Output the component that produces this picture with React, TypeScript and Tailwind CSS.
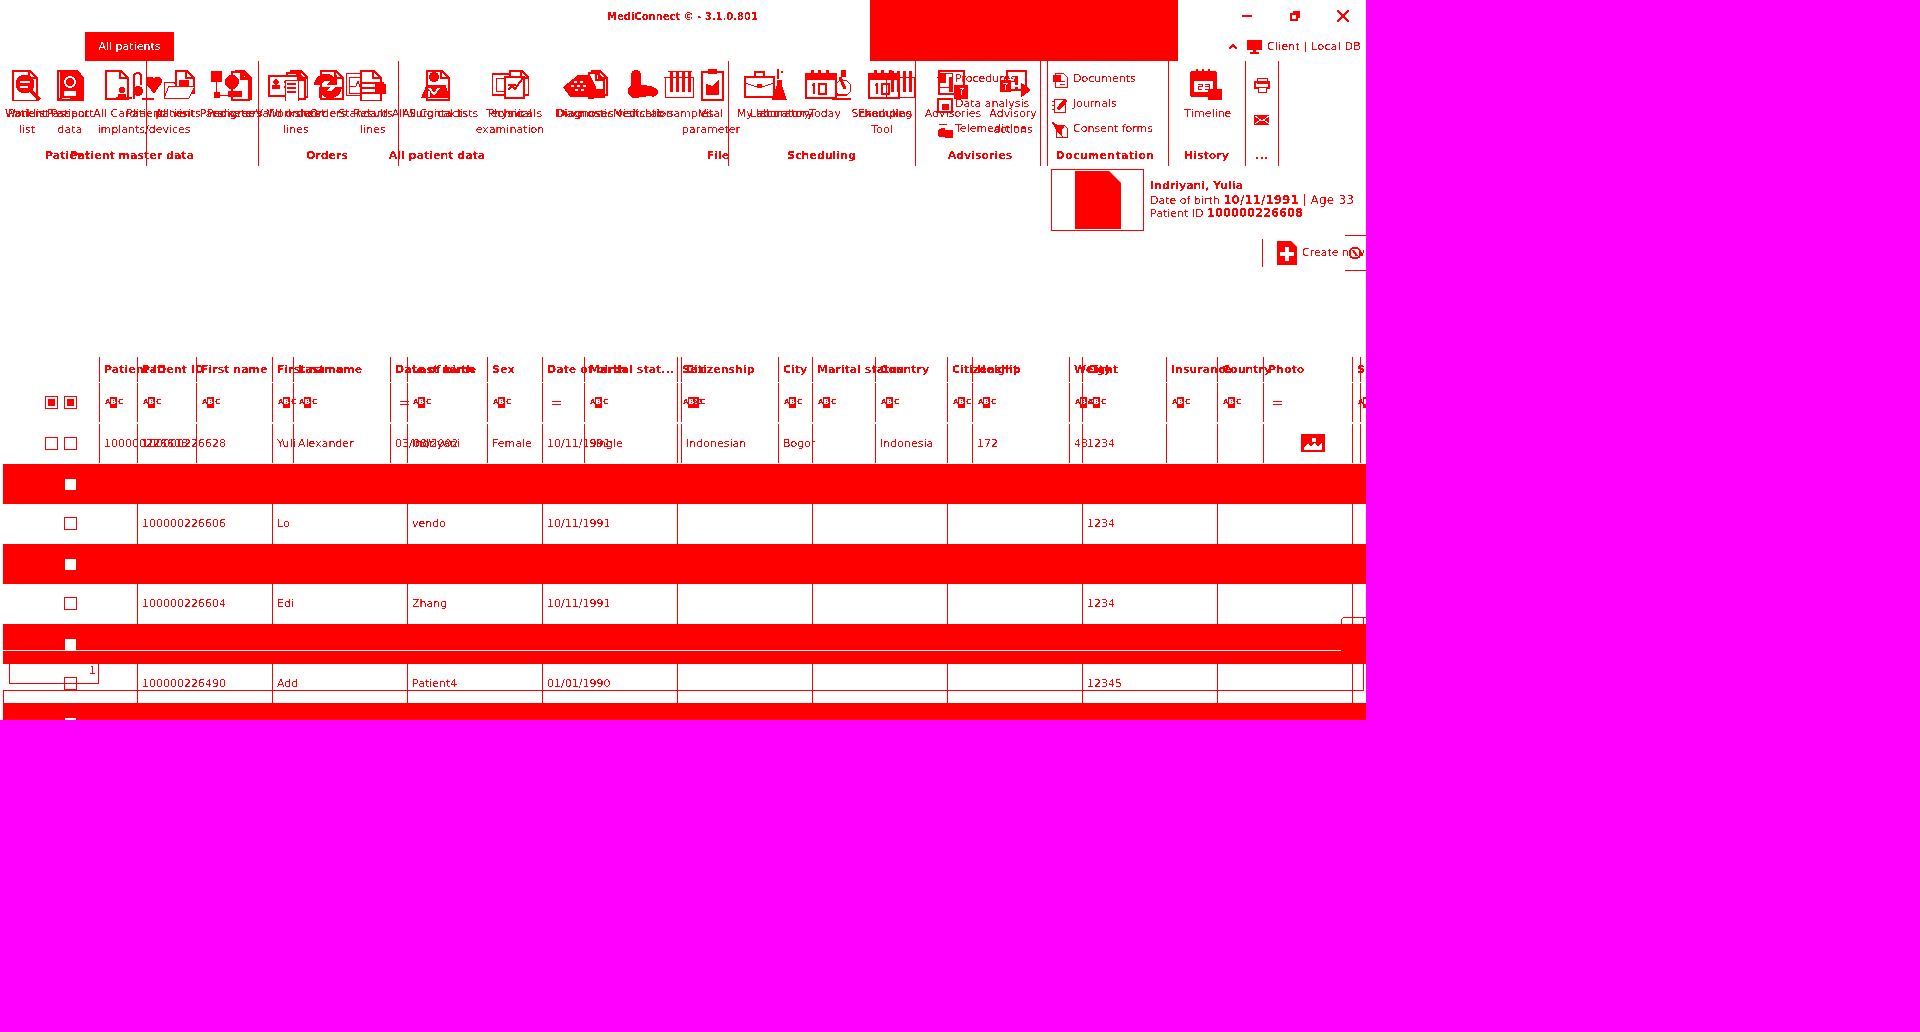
import type { ReactNode } from 'react'

const Svg = ({ w, h = 32, className = '', children }: { w: number; h?: number; className?: string; children: ReactNode }) => (
  <svg width={w} height={h} viewBox={`0 0 ${w} ${h}`} fill="none" stroke="#f00" shapeRendering="crispEdges" className={`shrink-0 ${className}`}>
    {children}
  </svg>
)

const Doc = ({ x = 0, y = 0, w = 22, h = 30 }: { x?: number; y?: number; w?: number; h?: number }) => (
  <path d={`M${x + 0.5} ${y + 0.5}h${w - 7}l7 7v${h - 7}h-${w}z M${x + w - 7} ${y}v8h7`} fill="#fff" strokeWidth="2" />
)

const Person = ({ x, y, s = 1 }: { x: number; y: number; s?: number }) => (
  <g fill="#f00" stroke="none">
    <circle cx={x} cy={y} r={5 * s} />
    <rect x={x - 7 * s} y={y + 6 * s} width={14 * s} height={7 * s} />
  </g>
)

const Ribbon = [
  <Svg w={32} className="ml-[11px]" key="1"><Doc x={1} y={1} w={24} h={30} /><circle cx="14" cy="15" r="9" fill="#f00" /><path d="M9 13h10M9 18h8" stroke="#fff" strokeWidth="2" /><path d="M20 22l9 9" strokeWidth="3" /></Svg>,
  <Svg w={28} className="ml-[13px]" key="2"><path d="M1 1h20l6 7v23H1z" fill="#f00" /><path d="M3 3v26M6 29h8" stroke="#fff" strokeWidth="1" /><circle cx="14" cy="13" r="6" fill="#fff" stroke="none" /><circle cx="14" cy="13" r="4" fill="#f00" stroke="none" /><path d="M8 22h12v5H8z" fill="#fff" stroke="none" /></Svg>,
  <Svg w={28} className="ml-[20px]" key="3"><Doc x={1} y={1} w={22} h={28} /><Person x={18} y={21} s={0.6} /><path d="M12 29h16" strokeWidth="2" /></Svg>,
  <Svg w={30} key="4"><path d="M2 30v-24q4-4 7 0v10" strokeWidth="2" /><path d="M14 10q5-4 8 0q4-4 7 0v4l-7 10l-8-10z" fill="#f00" strokeWidth="1" /><circle cx="6" cy="22" r="5" fill="#f00" stroke="none" /><path d="M10 30h12" strokeWidth="2" /></Svg>,
  <Svg w={32} className="ml-[1px]" key="5"><path d="M1 13h10l2 3h12v13H1z" fill="#fff" strokeWidth="1" /><Doc x={12} y={1} w={18} h={22} /><rect x="16" y="11" width="10" height="8" fill="#f00" stroke="none" /><path d="M1 29l5-12h26l-6 12" fill="#fff" strokeWidth="1" /></Svg>,
  <Svg w={41} className="ml-[16px]" key="6"><rect x="0" y="2" width="11" height="11" fill="#f00" stroke="none" /><Doc x={24} y={1} w={15} h={28} /><Doc x={20} y={2} w={17} h={28} /><circle cx="21" cy="13" r="7" fill="#f00" stroke="none" /><path d="M5 13v14M21 20v7M5 26h22" strokeWidth="1" /><circle cx="6" cy="26" r="3.5" fill="#f00" stroke="none" /><rect x="17" y="22" width="14" height="6" fill="#f00" stroke="none" /></Svg>,
  <Svg w={40} className="ml-[16px]" key="7"><Doc x={22} y={1} w={17} h={26} /><Doc x={18} y={3} w={18} h={26} /><rect x="1" y="7" width="29" height="20" fill="#fff" strokeWidth="2" /><Person x={8} y={13} s={0.55} /><path d="M16 13h10M16 18h10" strokeWidth="2" /><rect x="17" y="11" width="13" height="21" fill="#fff" strokeWidth="1" /><path d="M19 15h9M19 19h9M19 23h9" strokeWidth="2" /></Svg>,
  <Svg w={32} className="ml-[4px]" key="8"><Doc x={8} y={1} w={22} h={28} /><path d="M2 16a12 12 0 0 1 20-8l3-3v11h-11l4-4a7 7 0 0 0-9 4z" fill="#f00" stroke="none" /><path d="M30 18a12 12 0 0 1-20 8l-3 3v-11h11l-4 4a7 7 0 0 0 9-4z" fill="#f00" stroke="none" /></Svg>,
  <Svg w={42} className="ml-[1px]" key="9"><rect x="1" y="4" width="25" height="22" strokeWidth="1" /><rect x="4" y="8" width="22" height="16" strokeWidth="1" /><path d="M5 17h6l2-5l3 9l2-4h6" strokeWidth="1" /><Doc x={15} y={1} w={20} h={30} /><path d="M17 14h22M17 19h22M17 24h22" strokeWidth="2" /><rect x="30" y="15" width="11" height="10" fill="#f00" stroke="none" /></Svg>,
  <Svg w={29} className="ml-[34px]" key="10"><Doc x={5} y={1} w={22} h={29} /><circle cx="13" cy="8" r="5" fill="#f00" stroke="none" /><path d="M1 28l5-12h18l4 12z" fill="#f00" strokeWidth="1" /><path d="M8 19l5 6l5-6M8 28v-6" stroke="#fff" strokeWidth="2" /></Svg>,
  <Svg w={37} className="ml-[42px]" key="11"><rect x="0" y="5" width="26" height="21" strokeWidth="2" /><rect x="4" y="9" width="18" height="13" strokeWidth="1" /><Doc x={17} y={1} w={19} h={24} /><rect x="13" y="8" width="19" height="21" fill="#fff" strokeWidth="2" /><path d="M16 16h8M16 21l4-4l3 3l8-11" strokeWidth="2" /></Svg>,
  <Svg w={46} className="ml-[33px]" key="12"><Doc x={29} y={1} w={15} h={24} /><Doc x={26} y={3} w={15} h={24} /><path d="M1 18l15-12h12l6 12v10H8z" fill="#f00" stroke="none" /><path d="M12 13h3M18 13h3M9 17h3M15 17h3M21 17h3M13 21h3M19 21h3" stroke="#fff" strokeWidth="2" /><path d="M26 30v-7h-3l9-9v6h9v7h-9v3z" fill="#f00" stroke="none" /></Svg>,
  <Svg w={32} className="ml-[19px]" key="13"><g fill="#f00" stroke="none"><circle cx="9" cy="6" r="5" /><rect x="4" y="6" width="10" height="12" /><circle cx="8" cy="22" r="7" /><path d="M8 15l16 2q8 3 7 7q-2 5-8 3l-15 2z" /></g></Svg>,
  <Svg w={30} className="ml-[5px]" key="14"><path d="M0 8h30M1 8v20h28V8" strokeWidth="1" /><path d="M7 2v21M13 2v21M19 2v21M25 2v21" strokeWidth="3" /><path d="M4 2h24" strokeWidth="1" /></Svg>,
  <Svg w={23} className="ml-[7px]" key="15"><rect x="1" y="3" width="21" height="28" strokeWidth="2" /><rect x="7" y="0" width="9" height="5" fill="#f00" stroke="none" /><path d="M5 26V15l6 2l7-6v15z" fill="#f00" stroke="none" /></Svg>,
  <Svg w={31} className="ml-[20px]" key="16"><rect x="1" y="8" width="29" height="20" fill="#fff" strokeWidth="2" /><path d="M11 8V3h9v5" strokeWidth="2" /><path d="M1 14l12 4h5l12-4" strokeWidth="1" /><rect x="13" y="15" width="5" height="4" fill="#f00" stroke="none" /></Svg>,
  <Svg w={16} className="-ml-[3px]" key="17"><path d="M6 10V0M9 3h2" strokeWidth="2" /><path d="M5 11h5v5l5 15H0l5-15z" fill="#f00" stroke="none" /></Svg>,
  <Svg w={32} className="ml-[17px]" key="18"><rect x="1" y="5" width="30" height="24" fill="#fff" strokeWidth="2" /><rect x="1" y="5" width="30" height="6" fill="#f00" stroke="none" /><path d="M7 1v6M14 1v6M22 1v6" strokeWidth="3" /><path d="M9 25V15l-2 1M14 15h7v10h-7z" strokeWidth="2" /></Svg>,
  <Svg w={22} className="-ml-[7px]" key="19"><path d="M2 30h19" strokeWidth="2" /><circle cx="13" cy="19" r="8" strokeWidth="1" /><rect x="11" y="1" width="5" height="7" fill="#f00" stroke="none" /><path d="M10 8l5 12" strokeWidth="3" /><path d="M6 26h10" strokeWidth="2" /></Svg>,
  <Svg w={32} className="ml-[16px]" key="20"><rect x="1" y="5" width="30" height="24" fill="#fff" strokeWidth="2" /><rect x="1" y="5" width="30" height="6" fill="#f00" stroke="none" /><path d="M7 1v6M14 1v6M22 1v6" strokeWidth="3" /><path d="M9 25V15l-2 1M14 15h7v10h-7z" strokeWidth="2" /></Svg>,
  <Svg w={30} className="-ml-[15px]" key="21"><path d="M0 8h30M1 8v20h28V8" strokeWidth="1" /><path d="M7 2v21M13 2v21M19 2v21M25 2v21" strokeWidth="3" /></Svg>,
  <Svg w={33} className="ml-[20px]" key="22"><rect x="4" y="2" width="25" height="23" strokeWidth="2" /><path d="M2 8l5-4h4v10h-4z M14 8h4v15h-4z" fill="#f00" stroke="none" /><rect x="19" y="16" width="14" height="14" fill="#f00" stroke="none" /><path d="M25 19h4l-3 3v4" stroke="#fff" strokeWidth="1" /></Svg>,
  <Svg w={30} className="ml-[32px]" key="23"><rect x="7" y="2" width="19" height="19" strokeWidth="2" /><path d="M16 7v9M16 18v3" strokeWidth="3" /><rect x="0" y="11" width="11" height="12" fill="#f00" stroke="none" /><path d="M3 14h5l-3 3v4" stroke="#fff" strokeWidth="1" /><path d="M12 21h10M21 14l9 7l-9 7z" fill="#f00" strokeWidth="1" /></Svg>,
  <Svg w={32} className="ml-[160px]" key="24"><rect x="1" y="3" width="25" height="24" rx="2" fill="#fff" strokeWidth="2" /><rect x="1" y="3" width="25" height="7" fill="#f00" stroke="none" /><rect x="2" y="9" width="24" height="17" fill="#f00" stroke="none" /><rect x="4" y="12" width="19" height="11" fill="#fff" stroke="none" /><path d="M7 0v5M13 0v5M19 0v5" strokeWidth="2" /><path d="M8 15h4v2h-4v3h4M15 15h4v5h-4M15 17h4" strokeWidth="1" /><rect x="18" y="20" width="14" height="11" fill="#f00" stroke="none" /></Svg>,
]

const Tool = ({ w, top, bottom }: { w: string; top: string; bottom?: string }) => (
  <div className={`${w} shrink-0 flex flex-col items-center leading-[16px] whitespace-nowrap`}>
    <span>{top}</span>
    {bottom && <span>{bottom}</span>}
  </div>
)

const LabelsA = [
  ['w-[54px]', 'Patient', 'list'],
  ['w-[32px]', 'Patient', 'data'],
  ['w-[116px]', 'All Cardiac patient', 'implants/devices'],
  ['w-[58px]', 'Pedigree'],
  ['w-[72px]', 'Worksheet', 'lines'],
  ['w-[82px]', 'Results', 'lines'],
  ['w-[42px]', 'All Surgical lists'],
  ['w-[108px]', 'Physical', 'examination'],
  ['w-[42px]', 'Diagnoses'],
  ['w-[74px]', 'Medication'],
  ['w-[62px]', 'Vital', 'parameter'],
  ['w-[66px]', 'My laboratory'],
  ['w-[34px]', 'Today'],
  ['w-[80px]', 'Scheduling', 'Tool'],
  ['w-[62px]', 'Advisories'],
  ['w-[58px]', 'Advisory', 'actions'],
  ['w-[74px] ml-[129px]', 'Timeline'],
]

const LabelsB = [
  ['w-[54px]', 'Worklist'],
  ['w-[32px]', 'Passport'],
  ['w-[118px]', 'Patient'],
  ['w-[54px]', 'Parameters'],
  ['w-[60px]', 'Valid orders'],
  ['w-[20px]', 'Orders'],
  ['w-[50px]', 'Standard'],
  ['w-[94px]', 'All Contacts'],
  ['w-[64px]', 'Technicals'],
  ['w-[108px]', 'Diagnostic visits'],
  ['w-[50px]', 'Lab samples'],
  ['w-[152px]', 'Laboratory'],
  ['w-[58px]', 'Examples'],
]

const Groups = () => (
  <div className="flex items-end h-full pb-[2px] font-bold whitespace-nowrap">
    <span className="w-[264px] flex justify-center">Patient master data</span>
    <span className="w-[126px] flex justify-center">Orders</span>
    <span className="w-[94px] flex justify-center">All patient data</span>
    <span className="ml-[224px] w-[20px] flex justify-center">File</span>
    <span className="w-[187px] flex justify-center">Scheduling</span>
    <span className="w-[125px] flex justify-center pl-[5px]">Advisories</span>
    <span className="ml-[7px] w-[116px] flex justify-center tracking-[0.3px]">Documentation</span>
    <span className="ml-[5px] w-[77px] flex justify-center">History</span>
    <span className="w-[33px] flex justify-center">...</span>
  </div>
)

const SmallRow = ({ icon, text, gap }: { icon: ReactNode; text: string; gap: string }) => (
  <div className={`h-[25px] flex items-center whitespace-nowrap ${gap}`}>
    {icon}
    <span>{text}</span>
  </div>
)

const Abc = () => (
  <span className="inline-flex items-center h-[11px] text-[7px] leading-[11px] font-bold">
    <span className="w-[5px]">A</span>
    <span className="w-[7px] bg-[#f00] text-white text-center">B</span>
    <span className="w-[5px] pl-px">C</span>
  </span>
)

const Eq = () => <span className="block w-[9px] h-[4px] ml-[4px] border-y border-[#f00]" />

const Check = ({ on }: { on?: boolean }) => (
  <span className="w-[13px] h-[13px] border border-[#f00] flex items-center justify-center bg-white">
    {on && <span className="w-[7px] h-[7px] bg-[#f00]" />}
  </span>
)

type Col = { h: string; eq?: boolean; v?: string; photo?: boolean }

const layer1: Col[] = [
  { h: 'Patient ID', v: '100000226608' },
  { h: 'First name' },
  { h: 'Last name', v: 'Alexander' },
  { h: 'Date of birth', eq: true, v: '03/08/2002' },
  { h: 'Sex', v: 'Female' },
  { h: 'Marital stat...', v: 'Single' },
  { h: 'Citizenship', v: 'Indonesian' },
  { h: 'City', v: 'Bogor' },
  { h: 'Country', v: 'Indonesia' },
  { h: 'Height', v: '172' },
  { h: 'Weight', v: '48' },
  { h: 'Insurance' },
  { h: 'Photo', eq: true, photo: true },
  { h: 'S' },
]

const layer2: Col[] = [
  { h: 'Patient ID', v: '100000226628' },
  { h: 'First name', v: 'Yuli' },
  { h: 'Last name', v: 'Indriyani' },
  { h: 'Date of birth', eq: true, v: '10/11/1991' },
  { h: 'Sex' },
  { h: 'Marital status' },
  { h: 'Citizenship' },
  { h: 'City', v: '1234' },
  { h: 'Country' },
  { h: 'Si' },
]

const rows = [
  ['100000226606', 'Lo', 'vendo', '10/11/1991', '1234'],
  ['100000226604', 'Edi', 'Zhang', '10/11/1991', '1234'],
  ['100000226490', 'Add', 'Patient4', '01/01/1990', '12345'],
]

// header, filter and first data row of one of the two grids
const HeadRows = ({ cols, lead, width, check }: { cols: Col[]; lead: string; width: string; check: string }) => (
  <>
    <div className="flex h-[26px] font-bold">
      <div className={`${lead} shrink-0`} />
      {cols.map((c, i) => (
        <div key={i} className={`${width} shrink-0 h-[25px] border-l border-[#f00] pl-[4px] pt-[2px] flex items-center whitespace-nowrap`}>{c.h}</div>
      ))}
    </div>
    <div className="flex h-[41px]">
      <div className={`${lead} ${check} shrink-0 flex items-center h-[39px]`}><Check on /></div>
      {cols.map((c, i) => (
        <div key={i} className={`${width} shrink-0 h-[39px] border-l border-[#f00] pl-[5px] flex items-center`}>{c.eq ? <Eq /> : <Abc />}</div>
      ))}
    </div>
    <div className="flex h-[40px]">
      <div className={`${lead} ${check} shrink-0 flex items-center h-[39px]`}><Check /></div>
      {cols.map((c, i) => (
        <div key={i} className={`${width} shrink-0 h-[39px] border-l border-[#f00] pl-[4px] pt-[2px] flex items-center whitespace-nowrap`}>
          {c.photo ? (
            <svg width="24" height="18" viewBox="0 0 24 18" className="ml-[33px] -mt-[3px]">
              <rect width="24" height="18" fill="#f00" />
              <path d="M3 14l4-5l3 3l4-3l3 3l4-3v7H3z" fill="#fff" />
              <rect x="11" y="4" width="4" height="4" fill="#fff" />
            </svg>
          ) : c.v}
        </div>
      ))}
    </div>
  </>
)

const RedRow = () => (
  <div className="h-[40px] bg-[#f00] ml-[3px] flex items-center pl-[62px]">
    <span className="w-[11px] h-[11px] bg-white" />
  </div>
)

const WhiteRow = ({ r, short }: { r: string[]; short?: boolean }) => {
  const vals = [r[0], r[1], r[2], r[3], '', '', '', r[4], '', '']
  return (
    <div className={`flex ${short ? 'h-[39px]' : 'h-[40px]'}`}>
      <div className="w-[137px] shrink-0 pl-[64px] flex items-center h-[39px]"><Check /></div>
      {vals.map((v, i) => (
        <div key={i} className={`w-[135px] shrink-0 border-l border-[#f00] pl-[4px] flex items-center h-full whitespace-nowrap ${short ? 'pt-[2px]' : ''}`}>{v}</div>
      ))}
    </div>
  )
}

export default function App() {
  return (
    <div className="min-h-screen bg-[#ff00ff]">
      <div className="w-[1366px] h-[720px] bg-white overflow-hidden text-[#f00] text-[11px] font-['DejaVu_Sans',sans-serif] contrast-[50]">
        {/* title bar */}
        <div className="flex h-[61px]">
          <div className="w-[870px] shrink-0">
            <div className="h-[32px] pl-[607px] pt-[10px] font-bold leading-[14px] text-[10px]">MediConnect © - 3.1.0.801</div>
            <div className="ml-[85px] w-[89px] h-[29px] pt-[1px] bg-[#f00] text-white flex items-center justify-center">All patients</div>
          </div>
          <div className="w-[308px] h-[61px] bg-[#f00] shrink-0" />
          <div className="flex-1">
            <div className="h-[32px] flex items-center pl-[64px]">
              <span className="w-[10px] h-[2px] bg-[#f00]" />
              <svg width="10" height="10" viewBox="0 0 10 10" className="ml-[38px]" fill="none" stroke="#f00">
                <path d="M3 1h6v6M1 3h6v6H1z" strokeWidth="2" />
              </svg>
              <svg width="14" height="14" viewBox="0 0 14 14" className="ml-[36px]" fill="none" stroke="#f00">
                <path d="M1 1l12 12M13 1L1 13" strokeWidth="2" />
              </svg>
            </div>
            <div className="h-[29px] flex items-start pl-[50px] pt-[5px]">
              <div className="flex items-center h-[20px]">
                <svg width="10" height="6" viewBox="0 0 10 6" fill="none" stroke="#f00"><path d="M1 5l4-4l4 4" strokeWidth="2" /></svg>
                <svg width="15" height="15" viewBox="0 0 15 15" className="ml-[9px]"><path d="M0 0h15v10H9v2h3v2H3v-2h3v-2H0z" fill="#f00" /></svg>
                <span className="ml-[5px] whitespace-nowrap tracking-[0.2px]">Client | Local DB</span>
              </div>
            </div>
          </div>
        </div>

        {/* ribbon: the two states of the toolbar sit on top of each other */}
        <div className="grid grid-cols-1 h-[105px] w-[1366px]">
          <div className="col-start-1 row-start-1 flex h-full">
            {['w-[147px]', 'w-[112px]', 'w-[140px]', 'w-[330px]', 'w-[187px]', 'w-[125px]', 'w-[7px]', 'w-[121px]', 'w-[77px]', 'w-[33px]'].map((w, i) => (
              <span key={i} className={`${w} shrink-0 border-r border-[#f00] h-full`} />
            ))}
          </div>
          <div className="col-start-1 row-start-1 flex pt-[8px] h-[45px]">{Ribbon}</div>
          <div className="col-start-1 row-start-1 flex pt-[45px]">
            {LabelsA.map(([w, a, b]) => <Tool key={w + a} w={w} top={a} bottom={b} />)}
          </div>
          <div className="col-start-1 row-start-1 flex pt-[45px]">
            {LabelsB.map(([w, a, b]) => <Tool key={w + a} w={w} top={a} bottom={b} />)}
          </div>
          <div className="col-start-1 row-start-1 flex pt-[45px]">
            <Tool w="w-[46px] ml-[155px]" top="All visits" />
            <Tool w="w-[60px]" top="Pedigree" />
          </div>
          <div className="col-start-1 row-start-1 self-end pb-[2px] pl-[45px] font-bold whitespace-nowrap">Patient</div>
          <div className="col-start-1 row-start-1"><Groups /></div>
          <div className="col-start-1 row-start-1 flex pt-[6px] pl-[937px]">
            <div className="w-[115px] shrink-0">
              <SmallRow gap="gap-[2px]" text="Procedures" icon={<Svg w={16} h={16}><rect x="1" y="1" width="14" height="14" strokeWidth="1" /><path d="M3 5h5v5H3z" fill="#f00" /></Svg>} />
              <SmallRow gap="gap-[2px]" text="Data analysis" icon={<Svg w={16} h={16}><rect x="1" y="2" width="14" height="13" strokeWidth="2" /><path d="M5 7h6v5H5z" fill="#f00" /></Svg>} />
              <SmallRow gap="gap-[2px]" text="Telemedicine" icon={<Svg w={16} h={16}><path d="M2 3q4-2 8 0M4 6h4" strokeWidth="1" /><circle cx="5" cy="11" r="4" fill="#f00" /><rect x="8" y="8" width="8" height="7" fill="#f00" /></Svg>} />
            </div>
            <div className="w-[202px] shrink-0">
              <SmallRow gap="gap-[5px]" text="Documents" icon={<Svg w={16} h={16}><path d="M3 1h8l4 4v10H3z" strokeWidth="1" /><path d="M1 3h7v6H1z" fill="#f00" /><path d="M8 9h5M8 12h5" strokeWidth="1" /></Svg>} />
              <SmallRow gap="gap-[5px]" text="Journals" icon={<Svg w={16} h={16}><rect x="2" y="2" width="11" height="13" strokeWidth="1" /><path d="M5 11l8-9l2 2l-8 9z" fill="#f00" /><path d="M0 4h3M0 8h3M0 12h3" strokeWidth="1" /></Svg>} />
              <SmallRow gap="gap-[5px]" text="Consent forms" icon={<Svg w={16} h={16}><path d="M4 3h8l3 3v9H4z" strokeWidth="1" /><path d="M0 0l6 4l6 0l-3 5l1 5l-4-4z" fill="#f00" /></Svg>} />
            </div>
            <div className="flex flex-col">
              <Svg w={16} h={16} className="mt-[10px]"><rect x="3" y="1" width="10" height="5" strokeWidth="1" /><rect x="1" y="5" width="14" height="6" strokeWidth="2" /><rect x="4" y="10" width="8" height="5" fill="#fff" strokeWidth="1" /></Svg>
              <Svg w={16} h={12} className="mt-[21px]"><rect x="0" y="1" width="15" height="10" fill="#f00" stroke="none" /><path d="M1 2l7 5l7-5M1 10l5-4M15 10l-5-4" stroke="#fff" strokeWidth="1" /></Svg>
            </div>
          </div>
        </div>

        {/* patient card */}
        <div className="flex h-[66px] pl-[1051px] pt-[3px]">
          <div className="w-[93px] h-[62px] border border-[#f00] flex justify-center items-start pt-px shrink-0">
            <svg width="46" height="58" viewBox="0 0 46 58"><path d="M0 0h34l12 12v46H0z" fill="#f00" /></svg>
          </div>
          <div className="pl-[6px] pt-[10px] whitespace-nowrap">
            <div className="font-bold h-[14px] leading-[14px]">Indriyani, Yulia</div>
            <div className="h-[14px] leading-[14px]">Date of birth <b className="text-[12px] leading-[14px]">10/11/1991</b> <span className="text-[12px] leading-[14px] tracking-[0.2px]">| Age 33</span></div>
            <div className="h-[14px] leading-[14px] -mt-[1px]">Patient ID <b className="text-[11.5px] leading-[14px]">100000226608</b></div>
          </div>
        </div>

        {/* create row */}
        <div className="h-[125px] relative">
          <div className="flex items-center h-[28px] mt-[7px] ml-[1262px] border-l border-[#f00] pl-[14px] whitespace-nowrap absolute">
            <svg width="20" height="24" viewBox="0 0 20 24"><path d="M0 0h14l6 6v18H0z" fill="#f00" /><path d="M8 6h4v5h5v4h-5v5H8v-5H3v-4h5z" fill="#fff" /></svg>
            <span className="ml-[5px] pt-[1px]">Create new</span>
          </div>
          <span className="absolute left-[1345px] top-[3px] w-[21px] h-px bg-[#f00]" />
          <span className="absolute left-[1345px] top-[38px] w-[21px] h-px bg-[#f00]" />
          <svg width="14" height="14" viewBox="0 0 14 14" className="absolute left-[1348px] top-[14px]" fill="#fff" stroke="#f00">
            <circle cx="7" cy="7" r="5.5" strokeWidth="2" />
            <path d="M5 4l4 6" strokeWidth="2" />
          </svg>
        </div>

        {/* the two grids, on top of each other */}
        <div className="grid grid-cols-1 relative overflow-hidden h-[363px]">
          <div className="col-start-1 row-start-1">
            <HeadRows cols={layer1} lead="w-[99px]" width="w-[97px]" check="pl-[45px]" />
          </div>
          <div className="col-start-1 row-start-1">
            <HeadRows cols={layer2} lead="w-[137px]" width="w-[135px]" check="pl-[64px]" />
            <RedRow />
            <WhiteRow r={rows[0]} />
            <RedRow />
            <WhiteRow r={rows[1]} />
            <RedRow />
            <WhiteRow r={rows[2]} short />
            <RedRow />
          </div>

          {/* thin frame and pager over the grid */}
          <span className="absolute left-[3px] top-[293px] w-[1338px] h-px bg-white" />
          <span className="absolute left-[3px] top-[333px] w-[1360px] h-px bg-[#f00]" />
          <span className="absolute left-[3px] top-[333px] w-px h-[13px] bg-[#f00]" />
          <span className="absolute left-[1363px] top-[260px] w-px h-[74px] bg-[#f00]" />
          <span className="absolute left-[1341px] top-[260px] w-[25px] h-[8px] border-l border-t border-[#f00] rounded-tl-[4px]" />
          <div className="absolute left-[9px] top-[307px] w-[90px] h-[20px] border-x border-b border-[#f00] flex justify-end items-start pr-[2px] leading-[14px]">1</div>
        </div>
      </div>
    </div>
  )
}
